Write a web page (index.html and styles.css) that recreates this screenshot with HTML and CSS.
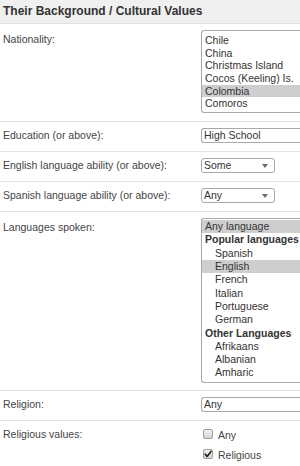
FILE: index.html
```html
<!DOCTYPE html>
<html lang="en">
<head>
<meta charset="utf-8">
<title>Their Background / Cultural Values</title>
<link rel="stylesheet" href="styles.css">
</head>
<body>
<section class="panel">
  <h2 class="panel-title">Their Background / Cultural Values</h2>

  <div class="row row--first row--list">
    <div class="label label--list">Nationality:</div>
    <div class="listbox listbox--nat" role="listbox">
      <div class="opt">Chile</div>
      <div class="opt">China</div>
      <div class="opt">Christmas Island</div>
      <div class="opt">Cocos (Keeling) Is.</div>
      <div class="opt opt--sel">Colombia</div>
      <div class="opt">Comoros</div>
    </div>
  </div>

  <div class="row">
    <div class="label">Education (or above):</div>
    <div class="select select--wide"><span>High School</span></div>
  </div>

  <div class="row">
    <div class="label">English language ability (or above):</div>
    <div class="select select--short"><span>Some</span><i class="arrow"></i></div>
  </div>

  <div class="row">
    <div class="label">Spanish language ability (or above):</div>
    <div class="select select--short"><span>Any</span><i class="arrow"></i></div>
  </div>

  <div class="row row--list">
    <div class="label label--list">Languages spoken:</div>
    <div class="listbox listbox--lang" role="listbox">
      <div class="lopt lopt--sel">Any language</div>
      <div class="lopt lopt--group">Popular languages</div>
      <div class="lopt lopt--sub">Spanish</div>
      <div class="lopt lopt--sub lopt--sel">English</div>
      <div class="lopt lopt--sub">French</div>
      <div class="lopt lopt--sub">Italian</div>
      <div class="lopt lopt--sub">Portuguese</div>
      <div class="lopt lopt--sub">German</div>
      <div class="lopt lopt--group">Other Languages</div>
      <div class="lopt lopt--sub">Afrikaans</div>
      <div class="lopt lopt--sub">Albanian</div>
      <div class="lopt lopt--sub">Amharic</div>
    </div>
  </div>

  <div class="row">
    <div class="label">Religion:</div>
    <div class="select select--wide"><span>Any</span></div>
  </div>

  <div class="row row--checks">
    <div class="label label--checks">Religious values:</div>
    <div class="checks">
      <label class="check"><span class="box"></span><span>Any</span></label>
      <label class="check"><span class="box box--on"><svg viewBox="0 0 10 10" width="10" height="10"><path d="M2.2 5.2 L4.1 7.4 L8 2.4" fill="none" stroke="#222" stroke-width="1.7" stroke-linecap="round" stroke-linejoin="round"/></svg></span><span>Religious</span></label>
    </div>
  </div>
</section>
</body>
</html>
```

FILE: styles.css
```css
html, body {
  margin: 0;
  padding: 0;
  background: #fff;
  overflow: hidden;
}
body {
  width: 300px;
  height: 466px;
  font-family: "Liberation Sans", Arial, sans-serif;
  font-size: 10.5px;
  color: #444;
}
.panel {
  width: 300px;
  overflow: hidden;
}
.panel-title {
  margin: 0;
  height: 23px;
  line-height: 22px;
  padding-left: 3px;
  background: #f0f0f0;
  border-bottom: 1px solid #e0e0e0;
  font-size: 12px;
  font-weight: bold;
  color: #333;
}
.row {
  display: grid;
  grid-template-columns: 201px 99px;
  align-items: start;
  border-top: 1px solid #e4e4e4;
  padding: 6px 0 8px;
}
.row--first {
  border-top: 0;
}
.row--list {
  padding-bottom: 7px;
}
.row--first.row--list {
  padding-bottom: 8px;
}
.label {
  padding-left: 3px;
  line-height: 15px;
  white-space: nowrap;
}
.label--list {
  margin-top: 2px;
}
.label--checks {
  margin-top: 2.5px;
}
.listbox {
  box-sizing: border-box;
  width: 99px;
  border: 1px solid #a9a9a9;
  border-right: 0;
  border-radius: 3px 0 0 3px;
  color: #333;
  background: #fff;
  overflow: hidden;
}
.listbox--nat {
  padding: 3px 0 2px;
}
.opt {
  height: 12.7px;
  line-height: 12.7px;
  padding-left: 3px;
  white-space: nowrap;
}
.opt--sel,
.lopt--sel {
  background: #cecece;
}
.listbox--lang {
  padding: 1px 0 2px;
}
.lopt {
  height: 13.3px;
  line-height: 13.3px;
  padding-left: 3px;
  white-space: nowrap;
}
.lopt--group {
  font-weight: bold;
}
.lopt--sub {
  padding-left: 13px;
}
.select {
  box-sizing: border-box;
  height: 15px;
  border: 1px solid #a9a9a9;
  border-radius: 3px;
  padding-left: 2px;
  line-height: 13px;
  color: #333;
  display: flex;
  align-items: center;
  justify-content: space-between;
  background: #fff;
  white-space: nowrap;
}
.select--wide {
  width: 99px;
  border-right: 0;
  border-radius: 3px 0 0 3px;
}
.select--short {
  width: 74px;
}
.arrow {
  width: 0;
  height: 0;
  border-left: 3px solid transparent;
  border-right: 3px solid transparent;
  border-top: 4px solid #6a6a6a;
  margin-right: 6px;
}
.row--checks {
  padding-top: 4px;
}
.checks {
  display: flex;
  flex-direction: column;
}
.check {
  display: flex;
  align-items: center;
  gap: 5px;
  height: 20px;
  padding-left: 2px;
  color: #444;
}
.box {
  box-sizing: border-box;
  width: 10px;
  height: 10px;
  border: 1px solid #9c9c9c;
  border-radius: 2px;
  background: linear-gradient(#f2f2f2, #d6d6d6);
  display: flex;
  align-items: center;
  justify-content: center;
  margin-top: -2px;
}
.box svg {
  display: block;
  margin: -1px;
}
```
